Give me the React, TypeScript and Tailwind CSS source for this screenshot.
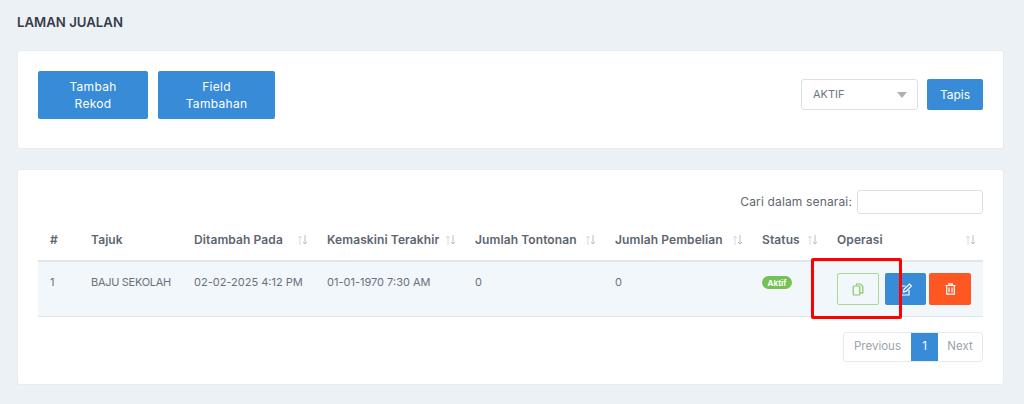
import React from "react"

const font = "font-['Inter','Liberation_Sans',sans-serif]"

function SortIcon() {
  return (
    <svg width="11" height="10" viewBox="0 0 11 10" fill="none" stroke="#d5d9de" strokeWidth="1">
      <path d="M3 10V1M1 3l2-2 2 2" />
      <path d="M8 0v9M6 7l2 2 2-2" stroke="#b9bec5" />
    </svg>
  )
}

function Th({ label, width, sort = true }: { label: string; width: string; sort?: boolean }) {
  return (
    <th className={`${width} h-[41px] pl-3 pr-[7px] text-left align-middle`}>
      <div className="flex items-center justify-between whitespace-nowrap">
        <span className="text-[12px] font-semibold tracking-[0.1px] text-[#5d6570]">{label}</span>
        {sort && <SortIcon />}
      </div>
    </th>
  )
}

function BlueButton({ children, width }: { children: React.ReactNode; width: string }) {
  return (
    <button className={`${width} h-[48px] rounded-[2px] bg-[#378bd7] text-[12px] leading-[17px] tracking-[0.3px] text-white`}>
      {children}
    </button>
  )
}

export default function App() {
  return (
    <div className={`${font} relative h-[404px] w-[1024px] overflow-hidden bg-[#ecf1f5] pl-[17px] pr-[20px] pt-[13px]`}>
      <h1 className="h-[18px] text-[13.2px] font-semibold leading-[18px] text-[#363d4a]">LAMAN JUALAN</h1>

      <div className="mt-[19px] flex h-[99px] items-start justify-between rounded-[3px] border border-[#e8ecf1] bg-white px-5 pt-5">
        <div className="flex gap-[10px]">
          <BlueButton width="w-[110px]">Tambah<br />Rekod</BlueButton>
          <BlueButton width="w-[117px]">Field<br />Tambahan</BlueButton>
        </div>
        <div className="mt-2 flex items-center gap-[9px]">
          <div className="flex h-[31px] w-[117px] items-center justify-between rounded-[3px] border border-[#dde1e6] pl-[11px] pr-[10px] text-[11px] text-[#6f7681]">
            <span>AKTIF</span>
            <svg width="10" height="6" viewBox="0 0 10 6"><path d="M0 0h10L5 6z" fill="#aeb2b8" /></svg>
          </div>
          <button className="h-[31px] w-[56px] rounded-[2px] bg-[#378bd7] text-[12px] text-white">Tapis</button>
        </div>
      </div>

      <div className="mt-[20px] h-[216px] rounded-[3px] border border-[#e8ecf1] bg-white px-5 pt-5">
        <div className="flex items-center justify-end gap-[5px]">
          <label className="text-[12px] tracking-[0.15px] text-[#5f6670]">Cari dalam senarai:</label>
          <input className="h-[24px] w-[126px] rounded-[3px] border border-[#dde1e6] bg-white" />
        </div>

        <table className="mt-[6px] w-[945px] table-fixed border-collapse">
          <thead>
            <tr className="border-b-2 border-[#e2e6eb]">
              <Th label="#" width="w-[41px]" sort={false} />
              <Th label="Tajuk" width="w-[103px]" sort={false} />
              <Th label="Ditambah Pada" width="w-[133px]" />
              <Th label="Kemaskini Terakhir" width="w-[148px]" />
              <Th label="Jumlah Tontonan" width="w-[140px]" />
              <Th label="Jumlah Pembelian" width="w-[147px]" />
              <Th label="Status" width="w-[75px]" />
              <Th label="Operasi" width="w-[158px]" />
            </tr>
          </thead>
          <tbody>
            <tr className="h-[55px] border-b border-[#e2e6eb] bg-[#f2f7fb] align-top text-[11px] text-[#6a717b]">
              <td className="pl-3 pt-[12px]">1</td>
              <td className="whitespace-nowrap pl-3 pt-[12px] tracking-[-0.3px]">BAJU SEKOLAH</td>
              <td className="whitespace-nowrap pl-3 pt-[12px]">02-02-2025 4:12 PM</td>
              <td className="whitespace-nowrap pl-3 pt-[12px]">01-01-1970 7:30 AM</td>
              <td className="pl-3 pt-[12px]">0</td>
              <td className="pl-3 pt-[12px]">0</td>
              <td className="pl-3 pt-[14px]">
                <span className="flex h-[13px] w-[30px] items-center justify-center rounded-full bg-[#74c154] text-[8px] font-bold text-white">Aktif</span>
              </td>
              <td className="pl-3 pt-[11px]">
                <div className="flex">
                  <button className="flex h-[32px] w-[42px] items-center justify-center rounded-[2px] border border-[#a9d796]">
                    <svg width="12" height="13" viewBox="0 0 12 13" fill="none" stroke="#85c76a" strokeWidth="1.2">
                      <path d="M4.5 2.5V1h3.8L10.8 3.4v6.4H8" />
                      <rect x="1.2" y="3" width="6.6" height="9" rx="1" />
                    </svg>
                  </button>
                  <button className="ml-[6px] flex h-[32px] w-[41px] items-center justify-center rounded-[2px] bg-[#378bd7]">
                    <svg width="13" height="13" viewBox="0 0 13 13" fill="none" stroke="white" strokeWidth="1.2">
                      <path d="M10 7v5H1V3h5.5" />
                      <path d="M4.5 9l.5-2.6L10.5 1l2 2L7 8.4z" />
                    </svg>
                  </button>
                  <button className="ml-[3px] flex h-[32px] w-[42px] items-center justify-center rounded-[2px] bg-[#ff5722]">
                    <svg width="11" height="12" viewBox="0 0 11 12" fill="none" stroke="white" strokeWidth="1.2">
                      <path d="M0.5 2.5h10M3.8 2.5V.8h3.4v1.7" />
                      <path d="M1.7 2.5v8.7h7.6V2.5M4 4.5v4.8M7 4.5v4.8" />
                    </svg>
                  </button>
                </div>
              </td>
            </tr>
          </tbody>
        </table>

        <div className="mt-[15px] flex justify-end">
          <div className="flex h-[30px] overflow-hidden rounded-[3px] border border-[#e6e9ed] text-[11.5px] text-[#9aa2ab]">
            <span className="flex w-[67px] items-center justify-center">Previous</span>
            <span className="flex w-[27px] items-center justify-center bg-[#378bd7] text-white">1</span>
            <span className="flex w-[44px] items-center justify-center">Next</span>
          </div>
        </div>
      </div>

      {/* highlight drawn over the screenshot */}
      <div className="absolute left-[811px] top-[258px] h-[61px] w-[91px] rounded-[2px] border-[3px] border-[#ff0000]" />
    </div>
  )
}
